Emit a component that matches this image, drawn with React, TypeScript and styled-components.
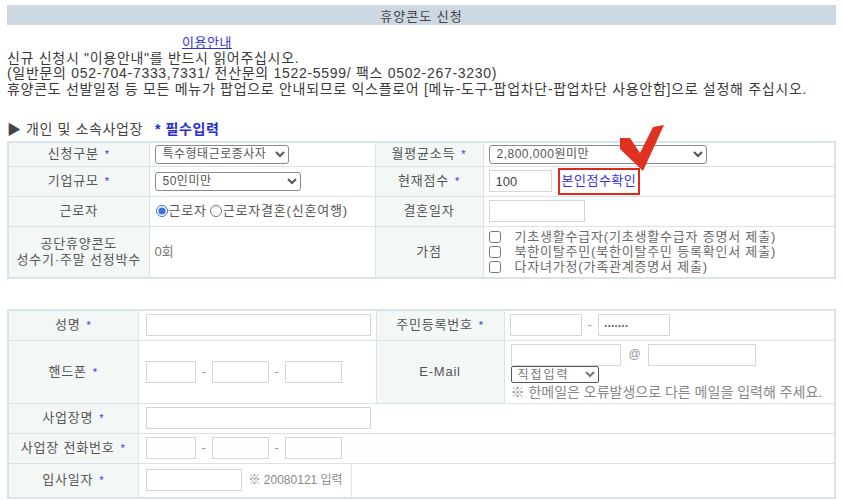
import styled, { createGlobalStyle } from 'styled-components'

const GlobalStyle = createGlobalStyle`
    * { box-sizing: border-box; }
    html, body { margin: 0; padding: 0; background: #ffffff; }
    body {
        font-family: "Liberation Sans", "Noto Sans CJK KR", sans-serif;
        font-size: 13px;
        color: #333333;
    }
`

const Page = styled.div`
    width: 844px;
    padding: 5px 8px 0 7px;
`

const TitleBar = styled.div`
    height: 20px;
    display: flex;
    align-items: center;
    justify-content: center;
    background-color: #cdd8e2;
    color: #444444;
    font-size: 13px;
    letter-spacing: 1px;
`

const Notice = styled.div`
    margin-top: 10px;
    line-height: 15.5px;
    font-size: 14px;
    letter-spacing: 0.7px;
    color: #3a3a3a;
`

const GuideLink = styled.a`
    display: block;
    padding-left: 175px;
    color: #3333dd;
    font-size: 13px;
    letter-spacing: 0.5px;
    text-decoration: underline;
`

const SectionTitle = styled.div`
    margin-top: 22px;
    height: 18px;
    display: flex;
    align-items: center;
    gap: 12px;
    color: #444444;
    font-size: 14px;
    letter-spacing: 0.6px;
`

const Required = styled.span`
    color: #2a2ad6;
    font-weight: bold;
`

const FormTable = styled.table<{ $top?: number }>`
    width: 100%;
    margin-top: ${p => p.$top ?? 0}px;
    border-collapse: collapse;
    table-layout: fixed;
    border: 2px solid #d8e3ea;
`

const Row = styled.tr<{ $h: number }>`
    height: ${p => p.$h}px;
`

const Label = styled.th`
    background-color: #f3f8f6;
    border: 1px solid #d8e3ea;
    font-weight: normal;
    color: #555555;
    text-align: center;
    letter-spacing: 0.8px;
    line-height: 16px;
    padding: 0;
`

const Star = styled.span`
    color: #3333ee;
    font-size: 11px;
    margin-left: 6px;
`

const Value = styled.td<{ $pl?: number }>`
    border: 1px solid #d8e3ea;
    padding: 0 4px 0 ${p => p.$pl ?? 5}px;
    color: #777777;
    vertical-align: middle;
    line-height: 16px;
`

const Select = styled.select<{ $w: number }>`
    width: ${p => p.$w}px;
    height: 19px;
    border: 1px solid #8a8a8a;
    border-radius: 3px;
    background: #ffffff;
    color: #555555;
    font-family: inherit;
    font-size: 12px;
    letter-spacing: 0.5px;
    padding: 0 0 0 3px;
    vertical-align: middle;
`

const Input = styled.input<{ $w: number }>`
    width: ${p => p.$w}px;
    height: 22px;
    border: 1px solid #d6d6d6;
    background: #ffffff;
    font-family: inherit;
    font-size: 13px;
    color: #444444;
    padding: 0 6px;
    vertical-align: middle;
`

const Secret = styled(Input)`
    font-size: 7px;
    letter-spacing: 1px;
    color: #555555;
`

const Inline = styled.div<{ $gap?: number }>`
    display: flex;
    align-items: center;
    gap: ${p => p.$gap ?? 6}px;
`

const Dash = styled.span`
    color: #999999;
    width: 4px;
    text-align: center;
    margin: 0 6px;
`

const ScoreLink = styled.a`
    position: relative;
    display: inline-flex;
    align-items: center;
    height: 27px;
    padding: 0 2px;
    border: 2px solid #dd2a1c;
    color: #3333ee;
    letter-spacing: 0.5px;
    font-size: 13px;
    text-decoration: none;
    margin-left: 4px;
`

const CheckMark = styled.svg`
    position: absolute;
    left: 60px;
    top: -45px;
    width: 46px;
    height: 46px;
    overflow: visible;
`

const Radio = styled.input`
    width: 12px;
    height: 12px;
    margin: 0 1px 0 0;
    accent-color: #3b73d6;
`

const RadioText = styled.label`
    color: #555555;
    letter-spacing: 0.8px;
    margin-right: 3px;
`

const CheckList = styled.div`
    display: flex;
    flex-direction: column;
    line-height: 15px;
`

const CheckItem = styled.label`
    display: flex;
    align-items: center;
    color: #6a6a6a;
    letter-spacing: 0.8px;
`

const Box = styled.input`
    width: 12px;
    height: 12px;
    margin: 0 14px 0 0;
`

const Hint = styled.div`
    color: #888888;
    font-size: 14px;
    margin-top: 1px;
`

const EmailStack = styled.div`
    display: flex;
    flex-direction: column;
    align-items: flex-start;
`

const At = styled.span`
    color: #999999;
    font-size: 12px;
    margin: 2px 7px 0 8px;
    align-self: flex-start;
`

const SmallSelect = styled(Select)`
    height: 17px;
    font-size: 12px;
    letter-spacing: 2px;
    line-height: 15px;
    color: #777777;
    border-color: #555555;
    border-radius: 2px;
    padding: 0 0 0 2px;
`

const SplitCell = styled.div`
    display: flex;
    align-items: stretch;
    height: 33px;
`

const SplitLeft = styled.div`
    width: 213px;
    display: flex;
    align-items: center;
    gap: 7px;
    border-right: 1px solid #d8e3ea;
    padding-left: 7px;
    color: #888888;
    font-size: 12px;
`

export default function App() {
    return (
        <Page>
            <GlobalStyle />
            <TitleBar>휴양콘도 신청</TitleBar>
            <Notice>
                <GuideLink href="#">이용안내</GuideLink>
                신규 신청시 "이용안내"를 반드시 읽어주십시오.
                <br />
                (일반문의 052-704-7333,7331/ 전산문의 1522-5599/ 팩스 0502-267-3230)
                <br />
                휴양콘도 선발일정 등 모든 메뉴가 팝업으로 안내되므로 익스플로어 [메뉴-도구-팝업차단-팝업차단 사용안함]으로 설정해 주십시오.
            </Notice>

            <SectionTitle>
                <span>▶ 개인 및 소속사업장</span>
                <Required>* 필수입력</Required>
            </SectionTitle>

            <FormTable $top={4}>
                <colgroup>
                    <col style={{ width: 141 }} />
                    <col style={{ width: 226 }} />
                    <col style={{ width: 108 }} />
                    <col />
                </colgroup>
                <tbody>
                    <Row $h={24}>
                        <Label>신청구분<Star>*</Star></Label>
                        <Value>
                            <Select $w={134} defaultValue="special">
                                <option value="special">특수형태근로종사자</option>
                            </Select>
                        </Value>
                        <Label>월평균소득<Star>*</Star></Label>
                        <Value>
                            <Select $w={218} defaultValue="a">
                                <option value="a">2,800,000원미만</option>
                            </Select>
                        </Value>
                    </Row>
                    <Row $h={30}>
                        <Label>기업규모<Star>*</Star></Label>
                        <Value>
                            <Select $w={146} defaultValue="50">
                                <option value="50">50인미만</option>
                            </Select>
                        </Value>
                        <Label>현재점수<Star>*</Star></Label>
                        <Value>
                            <Inline $gap={2}>
                                <Input $w={63} defaultValue="100" />
                                <ScoreLink href="#">
                                    본인점수확인
                                    <CheckMark viewBox="0 0 46 46">
                                        <polygon points="0,13 10,13 20,28 33,2 44,0 23,46 0,24" fill="#e0301f" />
                                    </CheckMark>
                                </ScoreLink>
                            </Inline>
                        </Value>
                    </Row>
                    <Row $h={30}>
                        <Label>근로자</Label>
                        <Value $pl={6}>
                            <Inline $gap={0}>
                                <Radio type="radio" name="worker" id="w1" defaultChecked />
                                <RadioText htmlFor="w1">근로자</RadioText>
                                <Radio type="radio" name="worker" id="w2" />
                                <RadioText htmlFor="w2">근로자결혼(신혼여행)</RadioText>
                            </Inline>
                        </Value>
                        <Label>결혼일자</Label>
                        <Value>
                            <Input $w={96} />
                        </Value>
                    </Row>
                    <Row $h={52}>
                        <Label>
                            공단휴양콘도
                            <br />
                            성수기·주말 선정박수
                        </Label>
                        <Value>0회</Value>
                        <Label>가점</Label>
                        <Value>
                            <CheckList>
                                <CheckItem><Box type="checkbox" />기초생활수급자(기초생활수급자 증명서 제출)</CheckItem>
                                <CheckItem><Box type="checkbox" />북한이탈주민(북한이탈주민 등록확인서 제출)</CheckItem>
                                <CheckItem><Box type="checkbox" />다자녀가정(가족관계증명서 제출)</CheckItem>
                            </CheckList>
                        </Value>
                    </Row>
                </tbody>
            </FormTable>

            <FormTable $top={30}>
                <colgroup>
                    <col style={{ width: 130 }} />
                    <col style={{ width: 238 }} />
                    <col style={{ width: 128 }} />
                    <col />
                </colgroup>
                <tbody>
                    <Row $h={30}>
                        <Label>성명<Star>*</Star></Label>
                        <Value $pl={7}>
                            <Input $w={225} />
                        </Value>
                        <Label>주민등록번호<Star>*</Star></Label>
                        <Value>
                            <Inline $gap={0}>
                                <Input $w={72} />
                                <Dash>-</Dash>
                                <Secret $w={72} type="password" defaultValue="1234567" />
                            </Inline>
                        </Value>
                    </Row>
                    <Row $h={63}>
                        <Label>핸드폰<Star>*</Star></Label>
                        <Value $pl={7}>
                            <Inline $gap={0}>
                                <Input $w={50} />
                                <Dash>-</Dash>
                                <Input $w={57} />
                                <Dash>-</Dash>
                                <Input $w={57} />
                            </Inline>
                        </Value>
                        <Label>E-Mail</Label>
                        <Value $pl={6}>
                            <EmailStack>
                                <Inline $gap={0}>
                                    <Input $w={110} />
                                    <At>@</At>
                                    <Input $w={108} />
                                </Inline>
                                <SmallSelect $w={88} defaultValue="self">
                                    <option value="self">직접입력</option>
                                </SmallSelect>
                                <Hint>※ 한메일은 오류발생으로 다른 메일을 입력해 주세요.</Hint>
                            </EmailStack>
                        </Value>
                    </Row>
                    <Row $h={30}>
                        <Label>사업장명<Star>*</Star></Label>
                        <Value colSpan={3} $pl={7}>
                            <Input $w={225} />
                        </Value>
                    </Row>
                    <Row $h={30}>
                        <Label>사업장 전화번호<Star>*</Star></Label>
                        <Value colSpan={3} $pl={7}>
                            <Inline $gap={0}>
                                <Input $w={50} />
                                <Dash>-</Dash>
                                <Input $w={57} />
                                <Dash>-</Dash>
                                <Input $w={57} />
                            </Inline>
                        </Value>
                    </Row>
                    <Row $h={34}>
                        <Label>입사일자<Star>*</Star></Label>
                        <Value colSpan={3} $pl={0}>
                            <SplitCell>
                                <SplitLeft>
                                    <Input $w={96} />
                                    <span>※ 20080121 입력</span>
                                </SplitLeft>
                            </SplitCell>
                        </Value>
                    </Row>
                </tbody>
            </FormTable>
        </Page>
    )
}
